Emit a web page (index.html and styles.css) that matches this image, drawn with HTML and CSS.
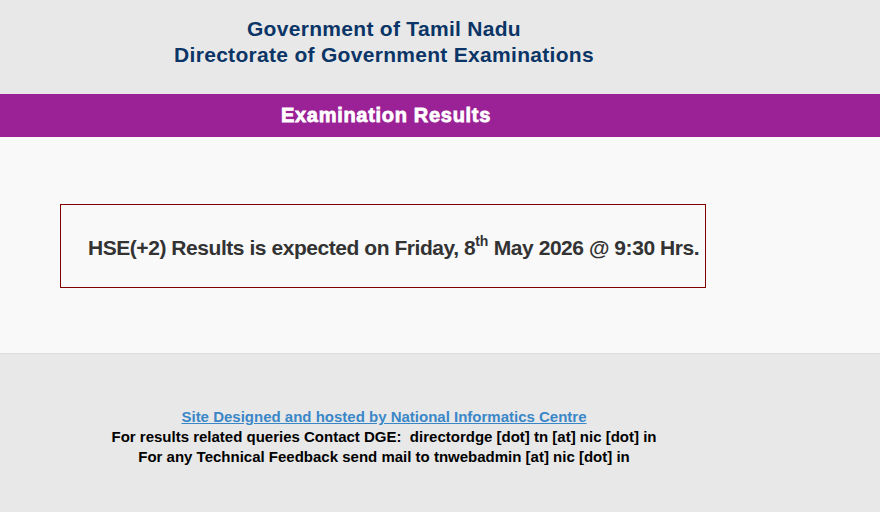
FILE: index.html
```html
<!DOCTYPE html>
<html>
<head>
<meta charset="utf-8">
<link rel="stylesheet" href="styles.css">
</head>
<body>
<header class="top">
  <div class="wrap">
    <h1 class="title">Government of Tamil Nadu<br>Directorate of Government Examinations</h1>
  </div>
</header>
<div class="band">
  <div class="wrap"><h2 class="band-title">Examination Results</h2></div>
</div>
<main class="main">
  <div class="wrap">
    <div class="notice">HSE(+2) Results is expected on Friday, 8<sup>th</sup> May 2026 @ 9:30 Hrs.</div>
  </div>
</main>
<footer class="foot">
  <div class="wrap">
    <a class="nic" href="#">Site Designed and hosted by National Informatics Centre</a><br>
    For results related queries Contact DGE:&nbsp; directordge [dot] tn [at] nic [dot] in<br>
    For any Technical Feedback send mail to tnwebadmin [at] nic [dot] in
  </div>
</footer>
</body>
</html>
```
FILE: styles.css
```css
html, body { margin: 0; padding: 0; }
body {
  background: #e8e8e8;
  font-family: "Liberation Sans", Arial, sans-serif;
  width: 880px;
  height: 512px;
  overflow: hidden;
}
.wrap { width: 768px; }
.top { height: 94px; background: #e8e8e8; }
.title {
  margin: 0;
  padding-top: 16px;
  text-align: center;
  font-size: 21px;
  line-height: 26px;
  font-weight: bold;
  color: #0b3566;
  letter-spacing: 0.3px;
}
.band { background: #9b2196; height: 43px; }
.band-title {
  margin: 0;
  padding-left: 4px;
  text-align: center;
  color: #fff;
  font-size: 20px;
  line-height: 43px;
  font-weight: 900;
  letter-spacing: 0.7px;
  -webkit-text-stroke: 0.8px #fff;
}
.main {
  background: #f9f9f9;
  border-bottom: 1px solid #dcdcdc;
  padding-top: 67px;
  box-sizing: border-box;
  height: 217px;
}
.notice {
  margin-left: 60px;
  border: 1px solid #800000;
  padding-left: 27px;
  box-sizing: border-box;
  width: 646px;
  height: 84px;
  font-size: 21px;
  font-weight: bold;
  color: #333;
  line-height: 85px;
  letter-spacing: -0.45px;
}
.notice sup { font-size: 14px; line-height: 0; vertical-align: 9px; letter-spacing: 0; }
.foot {
  padding-top: 53px;
  text-align: center;
  font-size: 15px;
  font-weight: bold;
  line-height: 20px;
  color: #000;
}
.nic { color: #3a87c8; text-decoration: underline; }
```
